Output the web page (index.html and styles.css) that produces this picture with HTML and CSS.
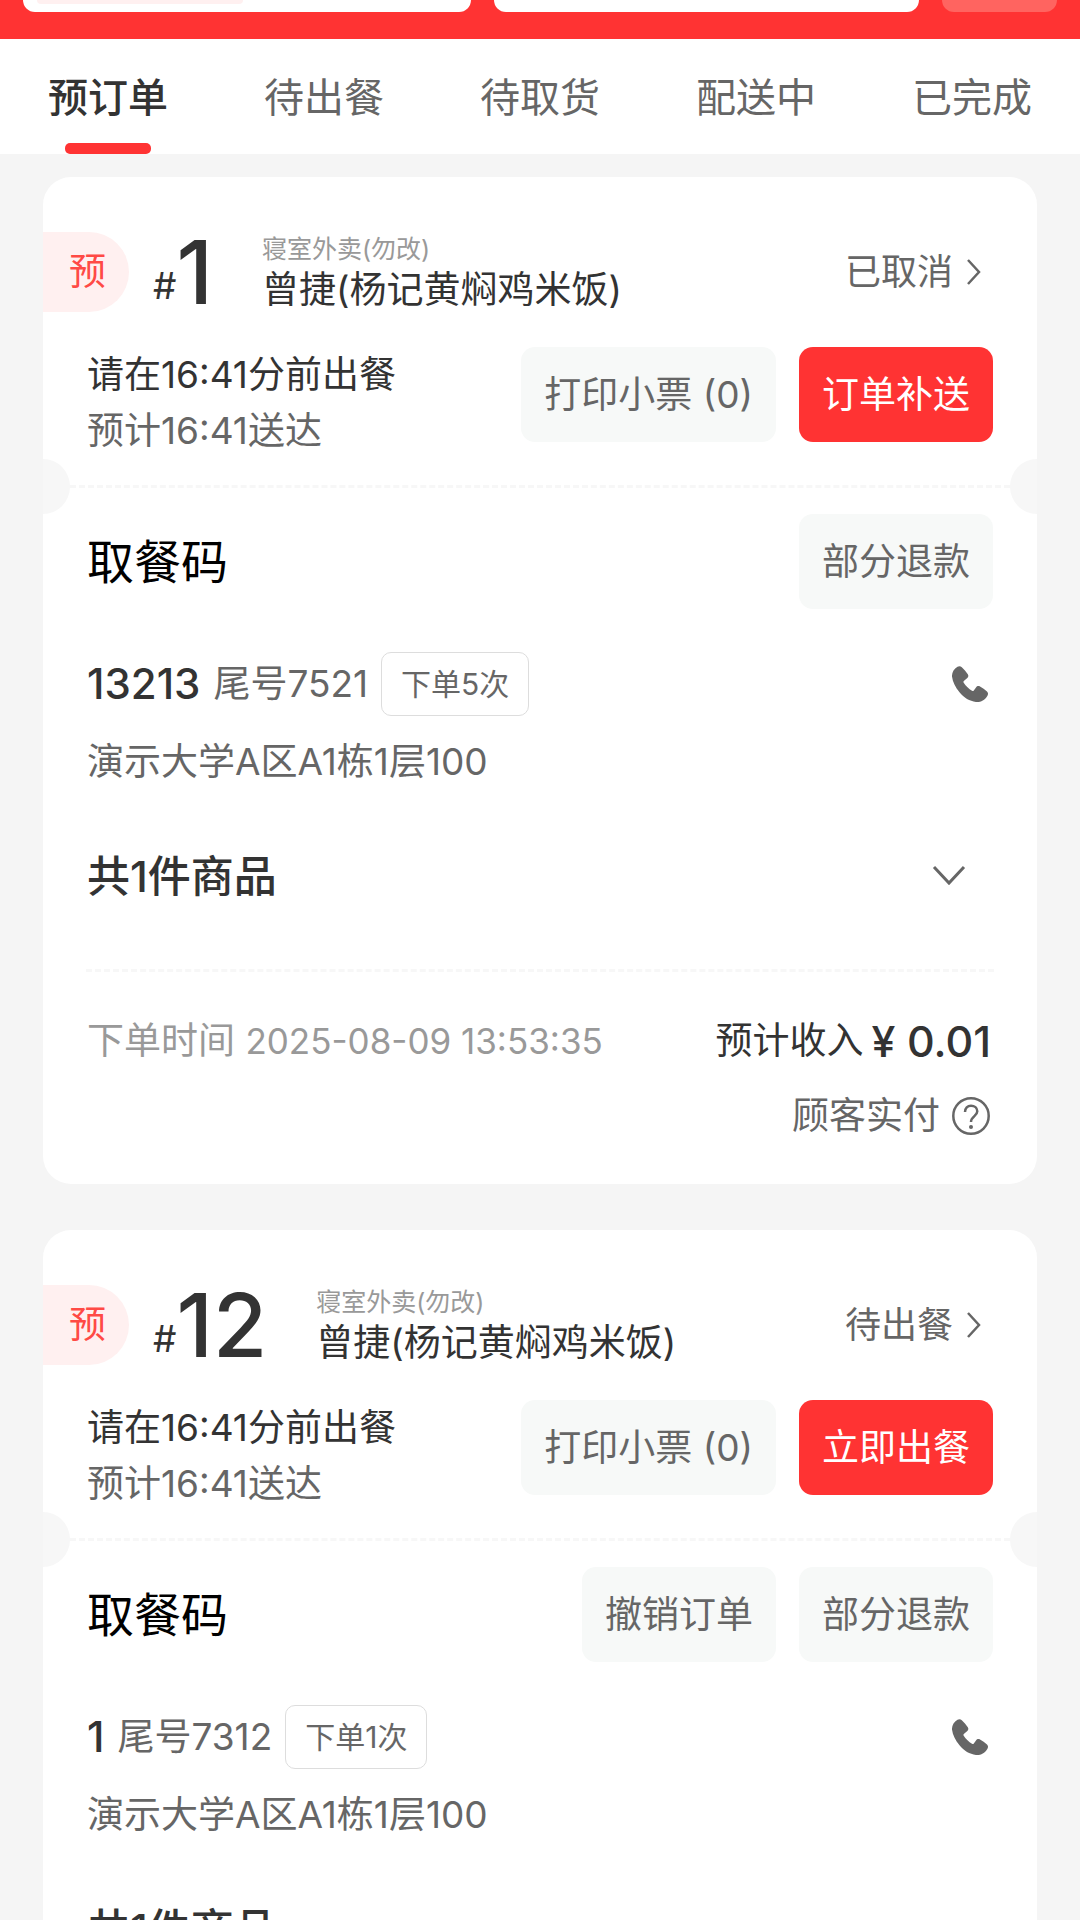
FILE: index.html
```html
<!DOCTYPE html>
<html lang="zh-CN">
<head>
<meta charset="utf-8">
<meta name="viewport" content="width=device-width, initial-scale=1">
<title>订单管理</title>
<link rel="stylesheet" href="styles.css">
</head>
<body>
<svg class="sprite" aria-hidden="true">
  <symbol id="icon-right" viewBox="0 0 16 28"><path d="M2 2l11 12L2 26" fill="none" stroke="currentColor" stroke-width="2.500"/></symbol>
  <symbol id="icon-down" viewBox="0 0 34 22"><path d="M2 2l15 16L32 2" fill="none" stroke="currentColor" stroke-width="3"/></symbol>
  <symbol id="icon-phone" viewBox="0 0 36 36"><path d="M5.500 .7C7 -.2 8.600 0 9.800 1.200C12 3.300 14 5.700 15.800 8.300C16.600 9.600 16.500 10.900 15.300 11.900L11.800 15C11.300 15.500 11.300 16 11.700 16.700C14 20 16.800 22.800 20 24.700C20.700 25.100 21.400 25 21.800 24.400L24 21.400C25 20 26.500 19.600 28 20.400C30.500 21.800 32.800 23.500 35 25.500C36.300 26.700 36.300 28.300 35.300 29.900C32.500 34.500 28.700 36.200 24 35.900C17.600 35.200 12 31.900 7.500 26.300C3.300 21.300 .8 16.300 0 10.600C-.2 6.500 1.700 3 5.500 .7Z" fill="currentColor"/></symbol>
  <symbol id="icon-help" viewBox="0 0 40 40"><circle cx="20" cy="20" r="17.700" fill="none" stroke="currentColor" stroke-width="2.500"/><path d="M14 16c0-3.800 2.600-6.300 6-6.300s6.300 2.300 6.300 5.600c0 4.700-6.300 5-6.300 10.700" fill="none" stroke="currentColor" stroke-width="2.500"/><circle cx="20" cy="31" r="2" fill="currentColor"/></symbol>
</svg>

<header class="topbar">
  <div class="topbar-field topbar-store"><div class="topbar-chip"></div></div>
  <div class="topbar-field topbar-search"></div>
  <div class="topbar-field topbar-action"></div>
</header>

<nav class="tabs">
  <button class="tab tab-active" type="button">预订单</button>
  <button class="tab" type="button">待出餐</button>
  <button class="tab" type="button">待取货</button>
  <button class="tab" type="button">配送中</button>
  <button class="tab" type="button">已完成</button>
</nav>

<main class="orders">
  <article class="card">
    <div class="card-head">
      <span class="badge">预</span>
      <div class="number"><span class="hash">#</span>1</div>
      <div class="store">
        <div class="store-type">寝室外卖(勿改)</div>
        <h2 class="store-name">曾捷(杨记黄焖鸡米饭)</h2>
      </div>
      <a class="status" href="#">已取消<svg class="icon-right"><use href="#icon-right"/></svg></a>
    </div>
    <div class="row schedule">
      <div class="times">
        <div class="dark">请在16:41分前出餐</div>
        <div>预计16:41送达</div>
      </div>
      <div class="actions">
        <button class="btn" type="button">打印小票 (0)</button>
        <button class="btn btn-primary" type="button">订单补送</button>
      </div>
    </div>
    <div class="tear"><div class="dashes"></div></div>
    <div class="row">
      <h3 class="pickup">取餐码</h3>
      <div class="actions">
        <button class="btn" type="button">部分退款</button>
      </div>
    </div>
    <div class="row customer">
      <strong class="customer-name">13213</strong>
      <span>尾号7521</span>
      <span class="tag">下单5次</span>
      <button class="icon-btn" type="button" aria-label="拨打电话"><svg class="icon-phone"><use href="#icon-phone"/></svg></button>
    </div>
    <div class="row address">演示大学A区A1栋1层100</div>
    <div class="row goods">
      <h3 class="goods-title">共1件商品</h3>
      <button class="icon-btn goods-toggle" type="button" aria-label="展开商品"><svg class="icon-down"><use href="#icon-down"/></svg></button>
    </div>
    <div class="dashes card-rule"></div>
    <div class="row income">
      <span class="light">下单时间 <time class="order-time">2025-08-09 13:53:35</time></span>
      <span class="income-label">预计收入</span>
      <strong class="income-value">¥ 0.01</strong>
    </div>
    <div class="row paid">
      <span>顾客实付</span>
      <button class="icon-btn" type="button" aria-label="说明"><svg class="icon-help"><use href="#icon-help"/></svg></button>
    </div>
  </article>

  <article class="card">
    <div class="card-head">
      <span class="badge">预</span>
      <div class="number"><span class="hash">#</span>12</div>
      <div class="store">
        <div class="store-type">寝室外卖(勿改)</div>
        <h2 class="store-name">曾捷(杨记黄焖鸡米饭)</h2>
      </div>
      <a class="status" href="#">待出餐<svg class="icon-right"><use href="#icon-right"/></svg></a>
    </div>
    <div class="row schedule">
      <div class="times">
        <div class="dark">请在16:41分前出餐</div>
        <div>预计16:41送达</div>
      </div>
      <div class="actions">
        <button class="btn" type="button">打印小票 (0)</button>
        <button class="btn btn-primary" type="button">立即出餐</button>
      </div>
    </div>
    <div class="tear"><div class="dashes"></div></div>
    <div class="row">
      <h3 class="pickup">取餐码</h3>
      <div class="actions">
        <button class="btn" type="button">撤销订单</button>
        <button class="btn" type="button">部分退款</button>
      </div>
    </div>
    <div class="row customer">
      <strong class="customer-name">1</strong>
      <span>尾号7312</span>
      <span class="tag">下单1次</span>
      <button class="icon-btn" type="button" aria-label="拨打电话"><svg class="icon-phone"><use href="#icon-phone"/></svg></button>
    </div>
    <div class="row address">演示大学A区A1栋1层100</div>
    <div class="row goods">
      <h3 class="goods-title">共1件商品</h3>
    </div>
  </article>
</main>
</body>
</html>
```

FILE: styles.css
```css
* { box-sizing: border-box; }

body {
  margin: 0;
  background: #f5f5f5;
  color: #666;
  font-family: Inter, "Noto Sans CJK SC", sans-serif;
  font-size: 37px;
  line-height: 56px;
}

button {
  border: 0;
  padding: 0;
  background: none;
  color: inherit;
  font: inherit;
}

h2, h3 { margin: 0; font-weight: 400; }

svg { display: block; }

.sprite { position: absolute; width: 0; height: 0; }

/* top bar */
.topbar {
  display: flex;
  gap: 23px;
  padding: 0 23px 27px;
  background: #f33;
}

.topbar-field {
  height: 12px;
  border-radius: 0 0 14px 14px;
  background: #fff;
}

.topbar-store { flex: 448; }
.topbar-search { flex: 425; }
.topbar-action { flex: 115; background: #ff6460; }

.topbar-chip {
  width: 46%;
  height: 4px;
  margin-left: 14px;
  border-radius: 0 0 8px 8px;
  background: #fff0f0;
}

/* tabs */
.tabs { display: flex; background: #fff; }

.tab {
  display: flex;
  flex: 1;
  flex-direction: column;
  align-items: center;
  padding-top: 31px;
  font-size: 40px;
}

.tab::after {
  width: 86px;
  height: 11px;
  margin-top: 17px;
  border-radius: 5px;
  content: "";
}

.tab-active { color: #333; font-weight: 500; }
.tab-active::after { background: #f33; }

/* order cards */
.orders {
  display: flex;
  flex-direction: column;
  gap: 46px;
  padding: 23px 43px;
}

.card {
  padding: 55px 0 40px;
  overflow: hidden;
  border-radius: 28px;
  background: #fff;
}

.card-head {
  display: flex;
  align-items: center;
  height: 80px;
  margin-bottom: 35px;
  padding-right: 55px;
}

.badge {
  width: 86px;
  padding-left: 26px;
  border-radius: 0 40px 40px 0;
  background: #fff0f0;
  color: #ff4a45;
  line-height: 80px;
}

.number {
  margin: 0 49px 0 24px;
  color: #333;
  font-size: 88px;
  font-weight: 500;
  line-height: 80px;
}

.hash {
  font-size: 37px;
  font-weight: 400;
  line-height: 1;
  vertical-align: 5px;
}

.store { padding-top: 2px; }
.store-type { color: #999; font-size: 25px; line-height: 34px; }
.store-name { color: #333; font-size: 37px; line-height: 48px; }

.status {
  display: flex;
  align-items: center;
  gap: 13px;
  margin-left: auto;
  color: #666;
  font-size: 36px;
  text-decoration: none;
}

.icon-right { width: 16px; height: 28px; }

.row {
  display: flex;
  align-items: center;
  justify-content: space-between;
  padding: 0 44px;
}

.schedule { align-items: flex-start; }

.dark { color: #333; }
.light { color: #999; }

.actions { display: flex; gap: 23px; }

.btn {
  padding: 0 23px;
  border-radius: 14px;
  background: #f7f9f8;
  line-height: 95px;
}

.btn-primary { background: #f33; color: #fff; }

/* ticket tear line with a notch at each edge */
.tear {
  display: flex;
  align-items: center;
  margin: 0 -27px;
}

.tear::before,
.tear::after {
  width: 54px;
  height: 55px;
  border-radius: 50%;
  background: #f7f7f7;
  content: "";
}

.dashes { flex: 1; border-top: 3px dashed #f7f7f7; }

.pickup { color: #000; font-size: 47px; }

.customer {
  justify-content: flex-start;
  gap: 13px;
  margin-top: 43px;
}

.customer-name { color: #333; font-size: 42px; font-weight: 500; }

.tag {
  padding: 0 19px;
  border: 1px solid #ddd;
  border-radius: 10px;
  font-size: 30px;
  line-height: 62px;
}

.icon-btn { flex: none; }
.customer .icon-btn { margin-left: auto; margin-right: 5px; }
.icon-phone { width: 36px; height: 36px; }

.address { margin-top: 18px; }

.goods { margin-top: 58px; }
.goods-title { color: #333; font-size: 43px; font-weight: 500; }
.goods-toggle { margin-right: 27px; }
.icon-down { width: 34px; height: 22px; }

.card-rule { margin: 65px 43px 0; }

.income,
.paid { padding-right: 46px; }

.income { margin-top: 41px; }
.order-time { font-size: 35px; }
.income-label { margin-left: auto; color: #333; }

.income-value {
  margin-left: 8px;
  color: #333;
  font-size: 43px;
  font-weight: 500;
}

.paid {
  justify-content: flex-end;
  gap: 11px;
  margin-top: 19px;
}

.icon-help { width: 40px; height: 40px; }
```
